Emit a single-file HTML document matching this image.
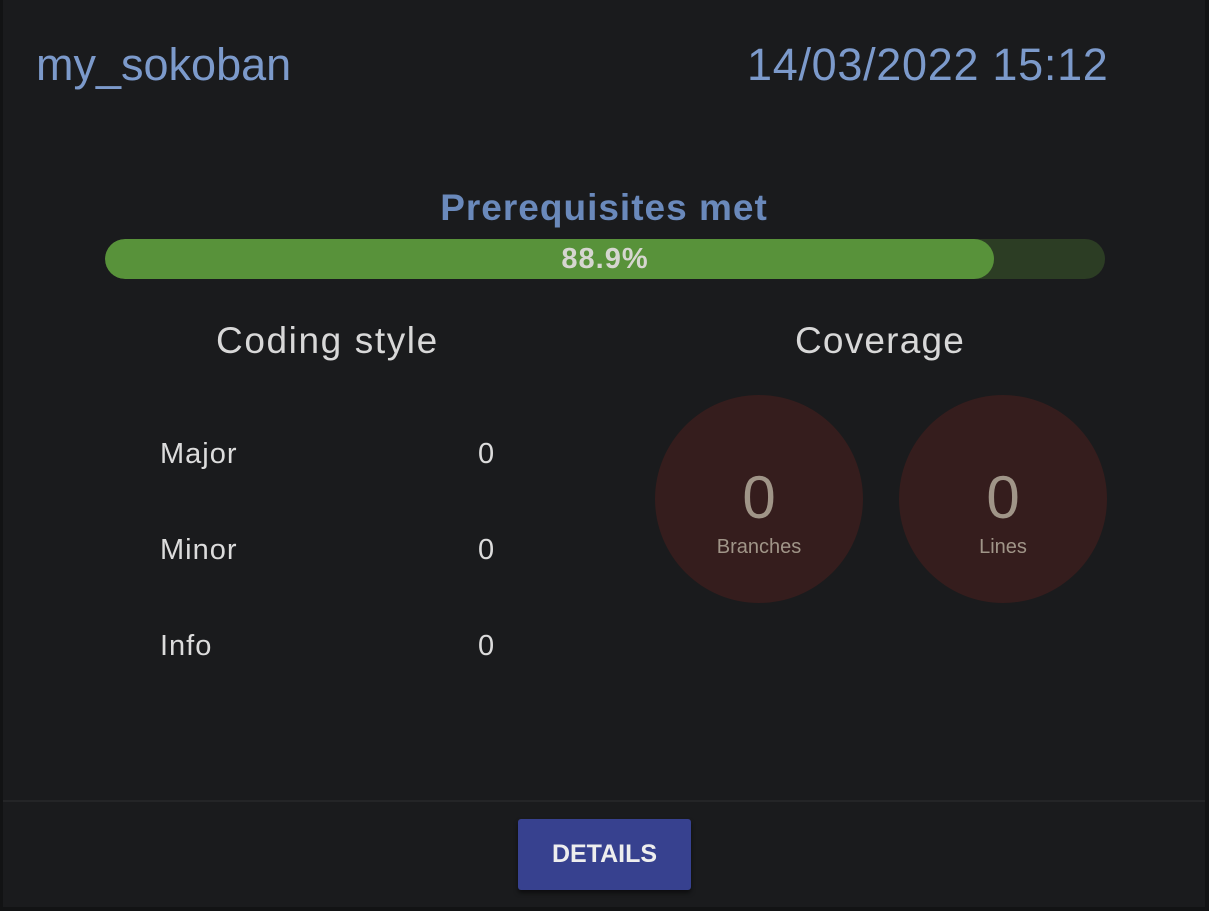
<!DOCTYPE html>
<html><head><style>
html,body{margin:0;padding:0;width:1209px;height:911px;background:#121314;overflow:hidden;font-family:"Liberation Sans",sans-serif}
.card{position:absolute;left:3px;top:0;width:1202px;height:907px;background:#1a1b1d}
.t{position:absolute;white-space:nowrap}
.circle{position:absolute;width:208px;height:208px;border-radius:50%;background:#351d1d;color:#a09588;text-align:center}
</style></head><body>
<div class="card">
<div class="t" style="left:33px;top:39px;font-size:45px;color:#7c9acb;font-weight:300">my_sokoban</div>
<div class="t" style="left:744px;top:39px;font-size:45px;color:#7c9acb;font-weight:300;letter-spacing:0.7px">14/03/2022 15:12</div>
<div class="t" style="left:0;width:1202px;text-align:center;top:187px;font-size:37px;font-weight:bold;color:#6a89bb;letter-spacing:1px">Prerequisites met</div>
<div style="position:absolute;left:102px;top:239px;width:1000px;height:40px;border-radius:20px;background:#2c3d24;overflow:hidden">
<div style="width:889px;height:40px;border-radius:20px;background:#58923a"></div>
<div class="t" style="left:0;width:1000px;text-align:center;top:4px;font-size:29px;font-weight:bold;color:#d6d6d0;letter-spacing:1px">88.9%</div>
</div>
<div class="t" style="left:213px;top:320px;font-size:37px;color:#d8d8d8;letter-spacing:1.6px">Coding style</div>
<div class="t" style="left:792px;top:320px;font-size:37px;color:#d8d8d8;letter-spacing:1.2px">Coverage</div>
<div class="t" style="left:157px;top:438px;font-size:29px;color:#dcdcdc;letter-spacing:1px">Major</div>
<div class="t" style="left:157px;top:534px;font-size:29px;color:#dcdcdc;letter-spacing:1px">Minor</div>
<div class="t" style="left:157px;top:630px;font-size:29px;color:#dcdcdc;letter-spacing:1px">Info</div>
<div class="t" style="left:475px;top:438px;font-size:29px;color:#dcdcdc">0</div>
<div class="t" style="left:475px;top:534px;font-size:29px;color:#dcdcdc">0</div>
<div class="t" style="left:475px;top:630px;font-size:29px;color:#dcdcdc">0</div>
<div class="circle" style="left:652px;top:395px"><div style="font-size:60px;margin-top:73px;line-height:60px">0</div><div style="font-size:20px;margin-top:8px">Branches</div></div>
<div class="circle" style="left:896px;top:395px"><div style="font-size:60px;margin-top:73px;line-height:60px">0</div><div style="font-size:20px;margin-top:8px">Lines</div></div>
<div style="position:absolute;left:0;top:800px;width:1202px;height:2px;background:#242527"></div>
<div style="position:absolute;left:515px;top:819px;width:173px;height:71px;border-radius:3px;background:#37418f;box-shadow:0 3px 4px rgba(0,0,0,.5);color:#eee;font-size:25px;font-weight:bold;text-align:center;line-height:71px">DETAILS</div>
</div>
</body></html>
